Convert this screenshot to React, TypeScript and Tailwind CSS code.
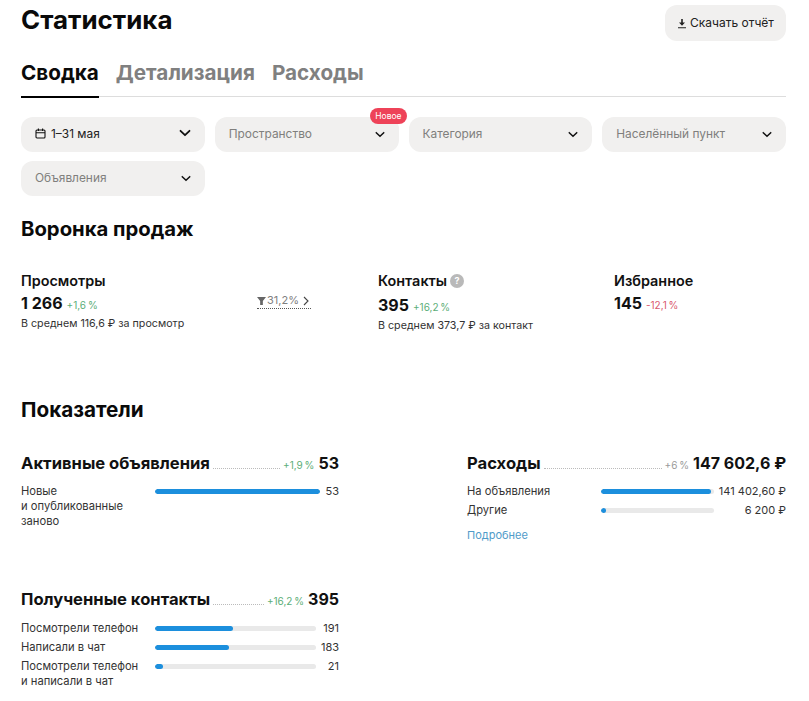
const font = "font-['Inter','Liberation_Sans',sans-serif]";

const Chevron = ({ big }: { big?: boolean }) => (
  <svg width={big ? 12 : 10} height={big ? 8 : 7} viewBox="0 0 12 8" fill="none" stroke="#111" strokeWidth="1.8" strokeLinecap="round" strokeLinejoin="round" className={big ? "-mt-[3px] mr-[1px]" : "mr-[1px]"}>
    <path d="M1.5 1.8 6 6.2l4.5-4.4" />
  </svg>
);

const Filter = ({ label, dark, icon, badge }: { label: string; dark?: boolean; icon?: boolean; badge?: boolean }) => (
  <div className="relative flex h-[35px] items-center justify-between rounded-xl bg-[#f1f0ef] pl-[14px] pr-[13px]">
    <div className={`-mt-[1px] flex items-center gap-[5px] text-[11.9px] ${dark ? "text-[#222]" : "text-[#807f7d]"}`}>
      {icon && (
        <svg width="11" height="11" viewBox="0 0 11 11" fill="none" stroke="#111" strokeWidth="1.1">
          <rect x="1" y="2" width="9" height="8" rx="1" />
          <path d="M1 4.8h9M3.4.5v2.4M7.6.5v2.4" />
        </svg>
      )}
      {label}
    </div>
    <Chevron big={dark} />
    {badge && (
      <span className="absolute right-[-8px] top-[-9px] rounded-full bg-[#ee4258] px-[5px] py-[1.5px] text-[8.5px] leading-[13px] text-white">
        Новое
      </span>
    )}
  </div>
);

const Stat = ({ title, value, delta, color, note, help }: { title: string; value: string; delta: string; color: string; note?: string; help?: boolean }) => (
  <div>
    <div className="flex items-center gap-[3px] text-[14.4px] font-semibold leading-[18px] text-[#111]">
      {title}
      {help && (
        <span className="flex h-[14px] w-[14px] items-center justify-center rounded-full bg-[#b9b9b9] text-[9px] font-bold text-white">?</span>
      )}
    </div>
    <div className={`${help ? "mt-[4px]" : "mt-[2px]"} flex items-baseline gap-[4px] leading-[22px]`}>
      <span className="text-[16px] font-bold text-[#111]">{value}</span>
      <span className={`text-[10px] ${color}`}>{delta}</span>
    </div>
    {note && <div className="text-[10.7px] leading-[16px] text-[#333]">{note}</div>}
  </div>
);

const Row = ({ label, pct, value, cols }: { label: string; pct: number; value: string; cols: string }) => (
  <div className={`grid ${cols} items-start`}>
    <div className="whitespace-pre-line text-[11.2px] leading-[15px] text-[#333]">{label}</div>
    <div className="mt-[5px] h-[5px] overflow-hidden rounded-full bg-[#e9e9e9]">
      <div className="h-full rounded-full bg-[#1c8fdd]" style={{ width: `${pct}%` }} />
    </div>
    <div className="text-right text-[11px] leading-[15px] text-[#333]">{value}</div>
  </div>
);

const MetricHead = ({ title, delta, color, value }: { title: string; delta: string; color: string; value: string }) => (
  <div className="flex items-baseline">
    <span className="whitespace-nowrap text-[16.6px] font-bold leading-[20px] text-[#111]">{title}</span>
    <span className="mx-[3px] flex-1 border-b border-dotted border-[#bbb]" />
    <span className={`whitespace-nowrap text-[10px] ${color}`}>{delta}</span>
    <span className="ml-[4px] whitespace-nowrap text-[16px] font-bold leading-[20px] text-[#111]">{value}</span>
  </div>
);

export default function App() {
  return (
    <div className={`${font} h-[701px] w-[809px] overflow-hidden bg-white pl-[21px] pr-[23px] pt-[5px]`}>
      <div className="flex items-start justify-between">
        <h1 className="text-[25.9px] font-bold leading-[30px] text-[#0a0a0a]">Статистика</h1>
        <button className="flex h-[36px] w-[121px] items-center justify-center gap-[3px] rounded-xl bg-[#f1f0ef] text-[12px] text-[#222]">
          <svg width="10" height="11" viewBox="0 0 10 11" className="fill-[#222]">
            <path d="M4.2 1h1.6v3.6H8L5 7.8 2 4.6h2.2zM1 9.2h8v1H1z" />
          </svg>
          Скачать отчёт
        </button>
      </div>

      <div className="mt-[12px] flex h-[44px] gap-[17px] border-b border-[#ddd] text-[20.7px] font-bold text-[#808080]">
        <div className="h-[45px] border-b-2 border-black pt-[5px] leading-[30px] text-[#0a0a0a]">Сводка</div>
        <div className="pt-[5px] leading-[30px]">Детализация</div>
        <div className="pt-[5px] leading-[30px]">Расходы</div>
      </div>

      <div className="mt-[20px] grid grid-cols-4 gap-x-[10px] gap-y-[9px]">
        <Filter label="1–31 мая" dark icon />
        <Filter label="Пространство" badge />
        <Filter label="Категория" />
        <Filter label="Населённый пункт" />
        <Filter label="Объявления" />
      </div>

      <h2 className="mt-[20px] text-[20.3px] font-bold leading-[26px] text-[#0a0a0a]">Воронка продаж</h2>

      <div className="relative mt-[30px] grid grid-cols-[357px_236px_1fr]">
        <Stat title="Просмотры" value="1 266" delta={"+1,6\u202f%"} color="text-[#5cae78]" note="В среднем 116,6 ₽ за просмотр" />
        <Stat title="Контакты" help value="395" delta={"+16,2\u202f%"} color="text-[#5cae78]" note="В среднем 373,7 ₽ за контакт" />
        <Stat title="Избранное" value="145" delta={"-12,1\u202f%"} color="text-[#d9586e]" />
        <div className="absolute left-[236px] top-[21px] flex h-[16px] w-[54px] items-center gap-[1px] border-b border-dotted border-[#555] text-[11px] text-[#808080]">
          <svg width="9" height="9" viewBox="0 0 10 10" className="fill-[#666]">
            <path d="M0 1h10L6.5 5.5V10h-3V5.5z" />
          </svg>
          31,2%
          <svg width="8" height="10" viewBox="0 0 8 10" fill="none" stroke="#444" strokeWidth="1.1" className="ml-[2px]">
            <path d="M2 1l4 4-4 4" />
          </svg>
        </div>
      </div>

      <h2 className="mt-[63px] text-[20.7px] font-bold leading-[26px] text-[#0a0a0a]">Показатели</h2>

      <div className="mt-[30px] grid grid-cols-[318px_319px] justify-between">
        <div>
          <MetricHead title="Активные объявления" delta={"+1,9\u202f%"} color="text-[#5cae78]" value="53" />
          <div className="mt-[11px]">
            <Row cols="grid-cols-[134px_165px_1fr]" label={"Новые\nи опубликованные\nзаново"} pct={100} value="53" />
          </div>
          <div className="mt-[60px]">
            <MetricHead title="Полученные контакты" delta={"+16,2\u202f%"} color="text-[#5cae78]" value="395" />
            <div className="mt-[12px] flex flex-col gap-[4px]">
              <Row cols="grid-cols-[134px_161px_1fr]" label="Посмотрели телефон" pct={48.5} value="191" />
              <Row cols="grid-cols-[134px_161px_1fr]" label="Написали в чат" pct={46} value="183" />
              <Row cols="grid-cols-[134px_161px_1fr]" label={"Посмотрели телефон\nи написали в чат"} pct={5} value="21" />
            </div>
          </div>
        </div>
        <div>
          <MetricHead title="Расходы" delta={"+6\u202f%"} color="text-[#9a9a9a]" value="147 602,6 ₽" />
          <div className="mt-[11px] flex flex-col gap-[4px]">
            <Row cols="grid-cols-[134px_113px_1fr]" label="На объявления" pct={97} value="141 402,60 ₽" />
            <Row cols="grid-cols-[134px_113px_1fr]" label="Другие" pct={4} value="6 200 ₽" />
          </div>
          <div className="mt-[9px] text-[11px] leading-[16px] text-[#4f9bc9]">Подробнее</div>
        </div>
      </div>
    </div>
  );
}
